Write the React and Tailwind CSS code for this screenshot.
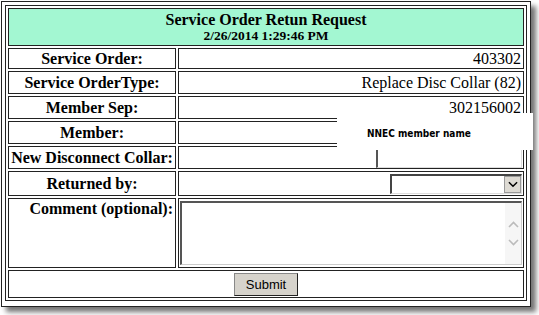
const rows = [
  { label: "Service Order:", value: "403302", h: "h-[21px]" },
  { label: "Service OrderType:", value: "Replace Disc Collar (82)", h: "h-[23px]" },
  { label: "Member Sep:", value: "302156002", h: "h-[23px]" },
  { label: "Member:", value: "", h: "h-[23px]" },
];

const Chevron = ({ up, className }) => (
  <svg width="11" height="7" viewBox="0 0 11 7" className={className}>
    <path
      d={up ? "M1 6 L5.5 1.5 L10 6" : "M1 1 L5.5 5.5 L10 1"}
      fill="none"
      stroke="currentColor"
      strokeWidth="1.6"
    />
  </svg>
);

export default function App() {
  return (
    <div className="w-[539px] h-[315px] bg-white font-['Liberation_Serif',serif] text-black">
      <div className="relative ml-[1px] mt-[1px] w-[530px] h-[306px] border border-[#222] bg-white p-[3px] shadow-[5px_5px_5px_rgba(0,0,0,0.55)]">
        <table className="w-full border border-[#222] border-separate border-spacing-[2px]">
          <tbody>
            <tr>
              <td colSpan={2} className="h-[38px] p-0 border border-[#222] bg-[#a3f7d2] text-center leading-none">
                <div className="text-[16px] font-bold">Service Order Retun Request</div>
                <div className="text-[13.5px] font-bold mt-[1px]">2/26/2014 1:29:46 PM</div>
              </td>
            </tr>
            {rows.map((r) => (
              <tr key={r.label}>
                <td className={`${r.h} w-[168px] p-0 border border-[#222] text-center text-[16px] font-bold leading-none`}>
                  {r.label}
                </td>
                <td className={`${r.h} p-0 pr-[2px] border border-[#222] text-right text-[16px] leading-none`}>
                  {r.value}
                </td>
              </tr>
            ))}
            <tr>
              <td className="h-[23px] p-0 border border-[#222] text-center text-[16px] font-bold leading-none whitespace-nowrap">
                New Disconnect Collar:
              </td>
              <td className="h-[23px] p-0 pr-[1px] border border-[#222]">
                <div className="ml-auto w-[146px] h-[20px] border-l-2 border-t-2 border-l-[#555] border-t-[#555] border-r border-b border-r-[#ddd] border-b-[#ddd] bg-white" />
              </td>
            </tr>
            <tr>
              <td className="h-[25px] p-0 border border-[#222] text-center text-[16px] font-bold leading-none">
                Returned by:
              </td>
              <td className="h-[25px] p-0 pr-[1px] border border-[#222]">
                <div className="ml-auto flex w-[132px] h-[20px] border-l-2 border-t-2 border-l-[#444] border-t-[#444] border-r border-b border-r-[#ddd] border-b-[#ddd] bg-white">
                  <div className="flex-1" />
                  <div className="w-[17px] h-full flex items-center justify-center bg-[#dedbd4] border border-[#999] text-black">
                    <Chevron className="w-[10px] h-[7px]" />
                  </div>
                </div>
              </td>
            </tr>
            <tr>
              <td className="h-[70px] p-0 pr-[2px] pt-[2px] align-top border border-[#222] text-right text-[16px] font-bold leading-none">
                Comment (optional):
              </td>
              <td className="h-[70px] p-0 px-[1px] border border-[#222]">
                <div className="flex h-[64px] border-l-2 border-t-2 border-l-[#555] border-t-[#555] border-r border-b border-r-[#ccc] border-b-[#ccc] bg-white">
                  <div className="flex-1" />
                  <div className="w-[16px] flex flex-col items-center justify-center gap-[11px] bg-[#f6f6f6] text-[#bbb]">
                    <Chevron up />
                    <Chevron />
                  </div>
                </div>
              </td>
            </tr>
            <tr>
              <td colSpan={2} className="h-[28px] p-0 border border-[#222] text-center">
                <button className="inline-block w-[64px] h-[23px] align-middle bg-[#d6d3cc] border border-t-[#888] border-l-[#888] border-r-[#222] border-b-[#222] font-['Liberation_Sans',sans-serif] text-[13px] leading-none">
                  Submit
                </button>
              </td>
            </tr>
          </tbody>
        </table>
        <div className="absolute left-[335px] top-[111px] w-[196px] h-[37px] bg-white flex items-center pl-[30px] pt-[4px]">
          <span className="font-['DejaVu_Sans_Condensed','DejaVu_Sans',sans-serif] text-[10px] font-bold">NNEC member name</span>
        </div>
      </div>
    </div>
  );
}
